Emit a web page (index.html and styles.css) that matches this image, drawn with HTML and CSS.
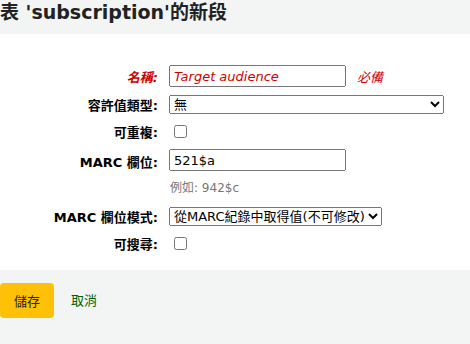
FILE: index.html
```html
<!DOCTYPE html>
<html lang="zh-Hant">
<head>
<meta charset="utf-8">
<link rel="stylesheet" href="styles.css">
</head>
<body>
<header class="page-head">
  <h1 class="title">表 'subscription'的新段</h1>
</header>
<form class="form">
  <div class="row">
    <label class="label required" for="name">名稱:</label>
    <input class="text" id="name" type="text" value="Target audience">
    <span class="req-note">必備</span>
  </div>
  <div class="row">
    <label class="label" for="av">容許值類型:</label>
    <select class="select wide" id="av"><option>無</option></select>
  </div>
  <div class="row">
    <label class="label" for="rep">可重複:</label>
    <input class="check" id="rep" type="checkbox">
  </div>
  <div class="row top">
    <label class="label lbl-pad" for="marc">MARC 欄位:</label>
    <div class="stack">
      <input class="text plain" id="marc" type="text" value="521$a">
      <div class="hint">例如: 942$c</div>
    </div>
  </div>
  <div class="row">
    <label class="label" for="mode">MARC 欄位模式:</label>
    <select class="select" id="mode"><option>從MARC紀錄中取得值(不可修改)</option></select>
  </div>
  <div class="row">
    <label class="label" for="srch">可搜尋:</label>
    <input class="check" id="srch" type="checkbox">
  </div>
</form>
<footer class="actions">
  <button class="btn-save" type="button">儲存</button>
  <a class="cancel" href="#">取消</a>
</footer>
</body>
</html>
```
FILE: styles.css
```css
html, body {
  margin: 0;
  padding: 0;
  background: #ffffff;
  font-family: "DejaVu Sans", "Noto Sans CJK TC", sans-serif;
  color: #000;
  font-size: 13px;
}
.page-head {
  background: #f3f4f4;
  height: 34px;
  box-sizing: border-box;
}
.title {
  margin: 0;
  font-size: 19px;
  font-weight: bold;
  color: #222;
  line-height: 24px;
  padding-top: 0;
}
.form {
  padding: 27px 0 20px 0;
  height: 236px;
  box-sizing: border-box;
}
.row {
  display: flex;
  align-items: center;
  padding: 4px 0;
}
.row.top {
  align-items: flex-start;
}
.label {
  width: 158px;
  text-align: right;
  font-weight: bold;
  margin-right: 11px;
  flex: none;
}
.lbl-pad {
  padding-top: 3px;
}
.label.required {
  color: #cc0000;
  font-style: italic;
}
.text {
  width: 177px;
  height: 22px;
  box-sizing: border-box;
  font-family: "DejaVu Sans", "Noto Sans CJK TC", sans-serif;
  font-size: 13px;
  margin: 0;
  padding: 1px 3px;
}
#name {
  color: #cc0000;
  font-style: italic;
}
.req-note {
  color: #cc0000;
  font-style: italic;
  margin-left: 11px;
}
.select {
  font-family: "DejaVu Sans", "Noto Sans CJK TC", sans-serif;
  font-size: 13px;
  margin: 0;
  height: 19px;
}
.select.wide {
  width: 275px;
}
.check {
  margin: 3px 3px 3px 5px;
}
.stack {
  display: flex;
  flex-direction: column;
}
.hint {
  color: #777;
  font-size: 12px;
  margin-top: 7px;
  margin-left: 1px;
  padding-bottom: 4px;
}
.actions {
  background: #f3f4f4;
  height: 74px;
  display: flex;
  align-items: flex-start;
  padding-top: 13px;
  box-sizing: border-box;
}
.btn-save {
  background: #ffc107;
  border: none;
  border-radius: 4px;
  width: 54px;
  height: 35px;
  font-family: "DejaVu Sans", "Noto Sans CJK TC", sans-serif;
  font-size: 13px;
  color: #222;
  margin: 0;
  padding: 0;
}
.cancel {
  color: #006100;
  text-decoration: none;
  margin-left: 17px;
  line-height: 35px;
}
```
